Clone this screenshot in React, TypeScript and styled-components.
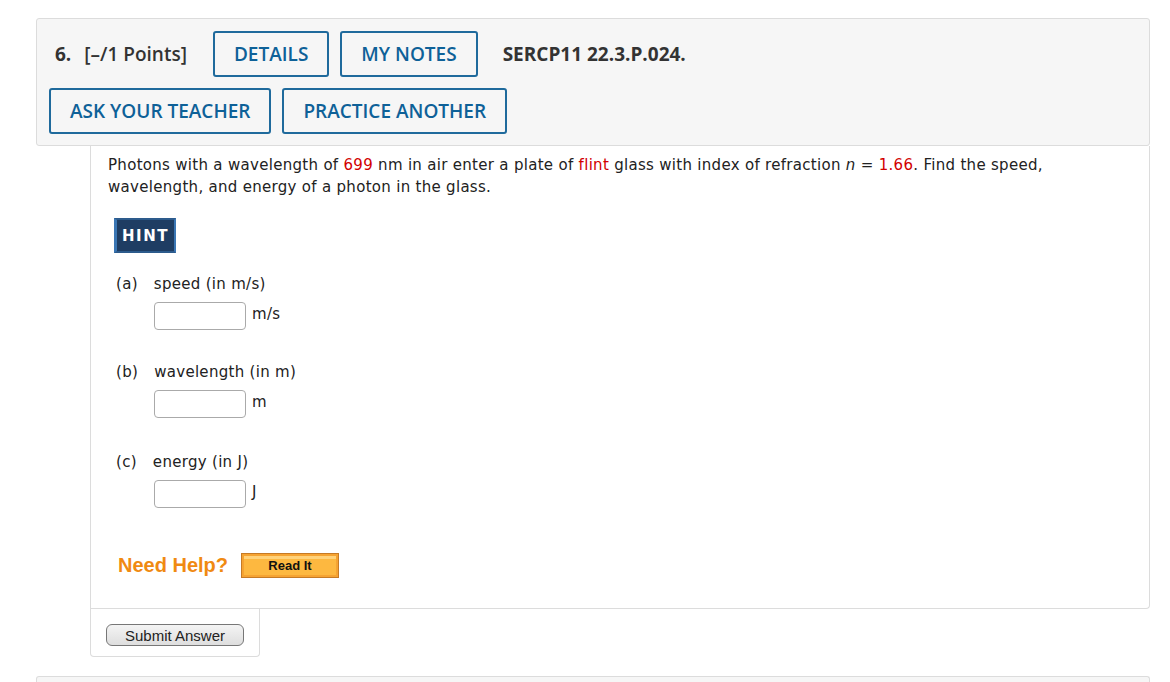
import React from "react";
import styled, { createGlobalStyle } from "styled-components";

const Global = createGlobalStyle`
  html, body { margin: 0; padding: 0; background: #fff; }
  body { font-family: "DejaVu Sans", Verdana, sans-serif; color: #222; }
`;

const Page = styled.div`
  padding: 18px 20px 0 36px;
  width: 1114px;
`;

const Header = styled.div`
  background: #f6f6f6;
  border: 1px solid #dcdcdc;
  border-radius: 3px;
  padding: 12px 12px 11px 12px;
  display: flex;
  flex-direction: column;
  gap: 11px;
  font-family: "Open Sans", sans-serif;
`;

const HeaderRow = styled.div<{ $indent?: number }>`
  display: flex;
  align-items: center;
  gap: 11px;
  padding-left: ${(p) => p.$indent ?? 0}px;
`;

const QNum = styled.span`
  font-weight: 700;
  font-size: 19px;
  color: #333;
  display: flex;
  align-items: baseline;
  gap: 13px;
`;

const Points = styled.span`
  font-weight: 600;
  font-size: 19px;
  color: #333;
  margin-right: 15px;
`;

const OutlineButton = styled.button`
  font-family: "Open Sans", sans-serif;
  font-weight: 600;
  font-size: 19px;
  color: #0e6198;
  background: #f6f6f6;
  border: 2px solid #1f6a9c;
  border-radius: 3px;
  height: 46px;
  padding: 0 19px;
  cursor: pointer;
`;

const Code = styled.span`
  font-weight: 700;
  font-size: 19px;
  color: #333;
  margin-left: 14px;
`;

const Body = styled.div`
  margin-left: 54px;
  border-left: 1px solid #dcdcdc;
  border-right: 1px solid #dcdcdc;
  border-bottom: 1px solid #dcdcdc;
  border-bottom-right-radius: 4px;
  padding: 8px 17px 30px 17px;
  letter-spacing: 0.3px;
`;

const Question = styled.p`
  margin: 0;
  font-size: 15px;
  line-height: 22px;
  color: #222;
`;

const Red = styled.span`
  color: #d20000;
`;

const Ital = styled.i``;

const HintButton = styled.button`
  margin: 20px 0 0 6px;
  background: #1e3d63;
  color: #fff;
  border: none;
  border-left: 3px solid #3a76b4;
  border-right: 2px solid #3a76b4;
  border-top: 2px solid #2d5b8c;
  border-bottom: 2px solid #2d5b8c;
  font-family: "DejaVu Sans", Verdana, sans-serif;
  font-weight: 700;
  font-size: 15px;
  letter-spacing: 1.5px;
  height: 35px;
  padding: 0 5px;
`;

const Part = styled.div<{ $gap: number }>`
  margin-top: ${(p) => p.$gap}px;
  padding-left: 8px;
`;

const PartLabel = styled.div`
  font-size: 15px;
  line-height: 20px;
  color: #222;
  display: flex;
  gap: 16px;
`;

const AnswerRow = styled.div`
  display: flex;
  align-items: center;
  gap: 6px;
  margin: 8px 0 0 38px;
  font-size: 15px;
`;

const Input = styled.input`
  width: 92px;
  height: 28px;
  box-sizing: border-box;
  border: 1px solid #aaa;
  border-radius: 4px;
  background: #fff;
`;

const Unit = styled.span`
  position: relative;
  top: -2px;
`;

const HelpRow = styled.div`
  margin: 45px 0 0 10px;
  display: flex;
  align-items: center;
  gap: 13px;
  letter-spacing: 0;
`;

const NeedHelp = styled.span`
  font-family: "Liberation Sans", Arial, sans-serif;
  font-weight: 700;
  font-size: 20px;
  color: #f08a12;
`;

const ReadIt = styled.button`
  width: 98px;
  height: 25px;
  background: #fdb840;
  border: 1px solid #c67a25;
  box-shadow: inset 0 0 0 2px #f5a332, inset 0 3px 0 2px #ffd27a;
  font-family: "Liberation Sans", Arial, sans-serif;
  font-weight: 700;
  font-size: 13px;
  color: #111;
  padding: 0;
`;

const SubmitBox = styled.div`
  margin-left: 54px;
  width: 170px;
  box-sizing: border-box;
  border-left: 1px solid #dcdcdc;
  border-right: 1px solid #dcdcdc;
  border-bottom: 1px solid #dcdcdc;
  border-radius: 0 0 4px 4px;
  padding: 15px 0 10px 15px;
`;

const SubmitButton = styled.button`
  width: 138px;
  height: 22px;
  border: 1px solid #777;
  border-radius: 6px;
  background: linear-gradient(#f4f4f4, #dedede);
  font-family: "Liberation Sans", Arial, sans-serif;
  font-size: 15px;
  color: #222;
  padding: 0;
`;

const NextBox = styled.div`
  margin-top: 19px;
  height: 20px;
  background: #f6f6f6;
  border: 1px solid #dcdcdc;
  border-bottom: none;
  border-radius: 3px 3px 0 0;
`;

const parts = [
  { letter: "(a)", label: "speed (in m/s)", unit: "m/s", gap: 21 },
  { letter: "(b)", label: "wavelength (in m)", unit: "m", gap: 32 },
  { letter: "(c)", label: "energy (in J)", unit: "J", gap: 34 },
];

export default function App() {
  return (
    <>
      <Global />
      <Page>
        <Header>
          <HeaderRow $indent={6}>
            <QNum>
              6.
              <Points>[–/1 Points]</Points>
            </QNum>
            <OutlineButton>DETAILS</OutlineButton>
            <OutlineButton>MY NOTES</OutlineButton>
            <Code>SERCP11 22.3.P.024.</Code>
          </HeaderRow>
          <HeaderRow>
            <OutlineButton>ASK YOUR TEACHER</OutlineButton>
            <OutlineButton>PRACTICE ANOTHER</OutlineButton>
          </HeaderRow>
        </Header>
        <Body>
          <Question>
            Photons with a wavelength of <Red>699</Red> nm in air enter a plate of{" "}
            <Red>flint</Red> glass with index of refraction <Ital>n</Ital> = <Red>1.66</Red>.
            Find the speed, wavelength, and energy of a photon in the glass.
          </Question>
          <HintButton>HINT</HintButton>
          {parts.map((p) => (
            <Part key={p.letter} $gap={p.gap}>
              <PartLabel>
                <span>{p.letter}</span>
                <span>{p.label}</span>
              </PartLabel>
              <AnswerRow>
                <Input type="text" />
                <Unit>{p.unit}</Unit>
              </AnswerRow>
            </Part>
          ))}
          <HelpRow>
            <NeedHelp>Need Help?</NeedHelp>
            <ReadIt>Read It</ReadIt>
          </HelpRow>
        </Body>
        <SubmitBox>
          <SubmitButton>Submit Answer</SubmitButton>
        </SubmitBox>
        <NextBox />
      </Page>
    </>
  );
}
